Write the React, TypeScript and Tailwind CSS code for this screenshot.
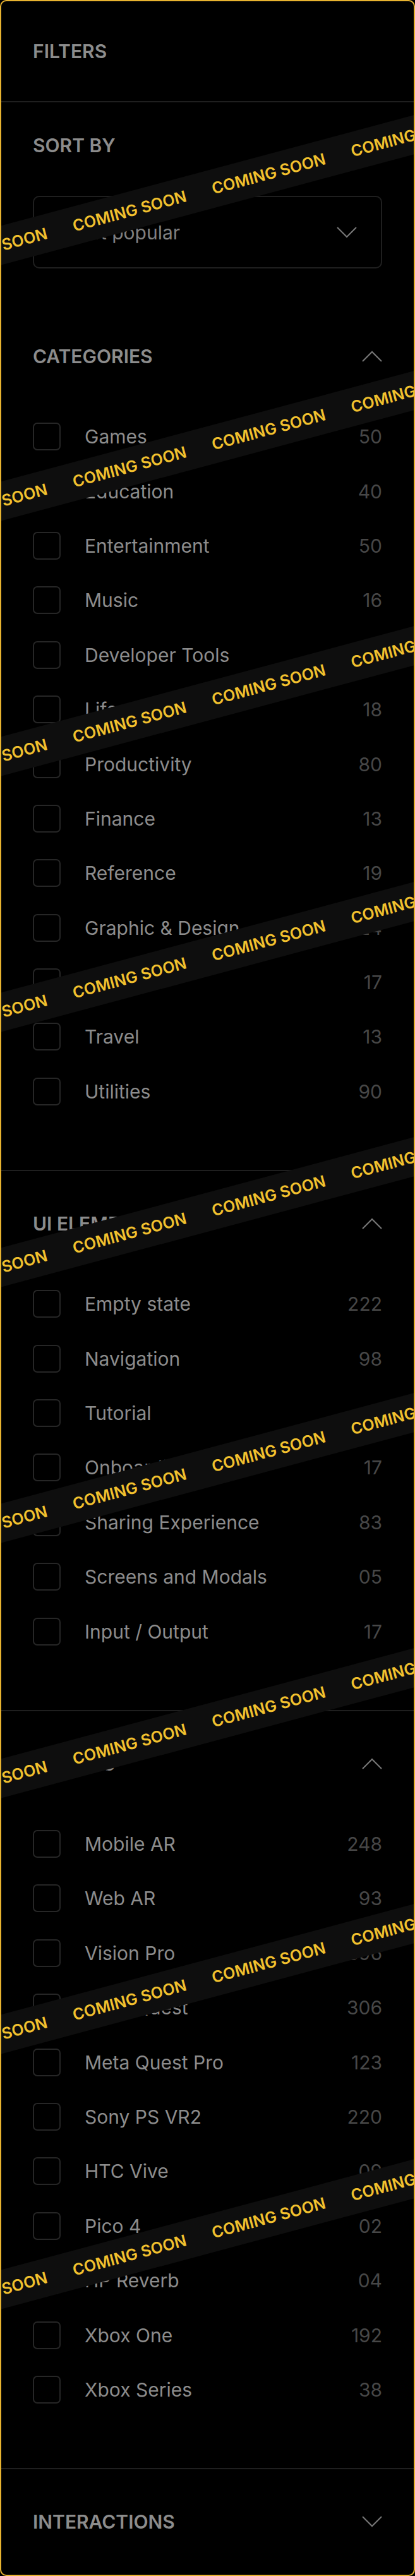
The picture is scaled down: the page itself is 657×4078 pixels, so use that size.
import React from 'react'

type Item = { label: string; count: string }

const categories: Item[] = [
  { label: 'Games', count: '50' },
  { label: 'Education', count: '40' },
  { label: 'Entertainment', count: '50' },
  { label: 'Music', count: '16' },
  { label: 'Developer Tools', count: '22' },
  { label: 'Lifestyle', count: '18' },
  { label: 'Productivity', count: '80' },
  { label: 'Finance', count: '13' },
  { label: 'Reference', count: '19' },
  { label: 'Graphic & Design', count: '24' },
  { label: 'Sports', count: '17' },
  { label: 'Travel', count: '13' },
  { label: 'Utilities', count: '90' },
]

const uiElements: Item[] = [
  { label: 'Empty state', count: '222' },
  { label: 'Navigation', count: '98' },
  { label: 'Tutorial', count: '31' },
  { label: 'Onboarding', count: '17' },
  { label: 'Sharing Experience', count: '83' },
  { label: 'Screens and Modals', count: '05' },
  { label: 'Input / Output', count: '17' },
]

const devices: Item[] = [
  { label: 'Mobile AR', count: '248' },
  { label: 'Web AR', count: '93' },
  { label: 'Vision Pro', count: '396' },
  { label: 'Meta Quest', count: '306' },
  { label: 'Meta Quest Pro', count: '123' },
  { label: 'Sony PS VR2', count: '220' },
  { label: 'HTC Vive', count: '09' },
  { label: 'Pico 4', count: '02' },
  { label: 'HP Reverb', count: '04' },
  { label: 'Xbox One', count: '192' },
  { label: 'Xbox Series', count: '38' },
]

// ribbon centres (page y at x = 328)
const ribbons = [0, 1, 2, 3, 4, 5, 6, 7, 8].map((k) => 301 + k * 404.5)

function Chevron({ up }: { up?: boolean }) {
  return (
    <svg width="32" height="18" viewBox="0 0 32 18" fill="none" className="shrink-0">
      <polyline
        points={up ? '1,17 16,2 31,17' : '1,1 16,16 31,1'}
        stroke="#7a7a7a"
        strokeWidth="2"
        fill="none"
      />
    </svg>
  )
}

function Row({ label, count }: Item) {
  return (
    <div className="flex h-[86.4px] items-center">
      <div className="size-[44px] shrink-0 rounded-[7px] border-2 border-[#262626]" />
      <span className="ml-[38px] flex-1 text-[30px] leading-none text-[#8c8c8c]">{label}</span>
      <span className="text-[30px] leading-none text-[#474747]">{count}</span>
    </div>
  )
}

function Section({
  title,
  items,
  open = true,
  divider = true,
}: {
  title: string
  items?: Item[]
  open?: boolean
  divider?: boolean
}) {
  return (
    <section className={`px-[50px] pt-[65px] ${divider ? 'border-t-2 border-[#1f1f1f]' : ''} ${open ? 'pb-[81px]' : 'pb-[63px]'}`}>
      <div className="flex h-[36px] items-center justify-between">
        <h2 className="text-[30px] font-semibold uppercase leading-none text-[#8c8c8c]">{title}</h2>
        <Chevron up={open} />
      </div>
      {open && items && (
        <div className="mt-[66px] flex flex-col">
          {items.map((it) => (
            <Row key={it.label} {...it} />
          ))}
        </div>
      )}
    </section>
  )
}

function Ribbon({ y }: { y: number }) {
  return (
    <div
      className="absolute left-[-274px] flex h-[60px] w-[1200px] -rotate-15 items-center overflow-hidden bg-[#0e0e0e]"
      style={{ top: y - 32 }}
    >
      <div className="-ml-[76px] flex shrink-0">
        {[0, 1, 2, 3, 4, 5].map((i) => (
          <span
            key={i}
            className="w-[228px] shrink-0 whitespace-nowrap text-[25px] font-semibold leading-none text-[#f2c12e]"
          >
            COMING SOON
          </span>
        ))}
      </div>
    </div>
  )
}

export default function App() {
  return (
    <div className="bg-black" style={{ fontFamily: 'Inter, "Noto Sans", sans-serif' }}>
      <div className="relative h-[4078px] w-[657px] overflow-hidden rounded-[10px] border-2 border-[#e8b330] bg-black">
        <div className="flex h-[160px] items-center border-b-2 border-[#1f1f1f] px-[50px]">
          <h1 className="text-[30px] font-semibold uppercase leading-none text-[#8c8c8c]">Filters</h1>
        </div>

        <div className="px-[50px] pt-[50px] pb-[56px]">
          <h2 className="flex h-[36px] items-center text-[30px] font-semibold uppercase leading-none text-[#8c8c8c]">
            Sort by
          </h2>
          <div className="mt-[62px] flex h-[115px] items-center justify-between rounded-[10px] border-2 border-[#1f1f1f] pl-[44px] pr-[38px]">
            <span className="text-[30px] leading-none text-[#808080]">Most popular</span>
            <Chevron />
          </div>
        </div>

        <Section title="Categories" items={categories} divider={false} />
        <Section title="UI Elements" items={uiElements} />
        <Section title="Devices" items={devices} />
        <Section title="Interactions" open={false} />

        <div className="pointer-events-none absolute inset-0">
          {ribbons.map((y) => (
            <Ribbon key={y} y={y} />
          ))}
        </div>
      </div>
    </div>
  )
}
